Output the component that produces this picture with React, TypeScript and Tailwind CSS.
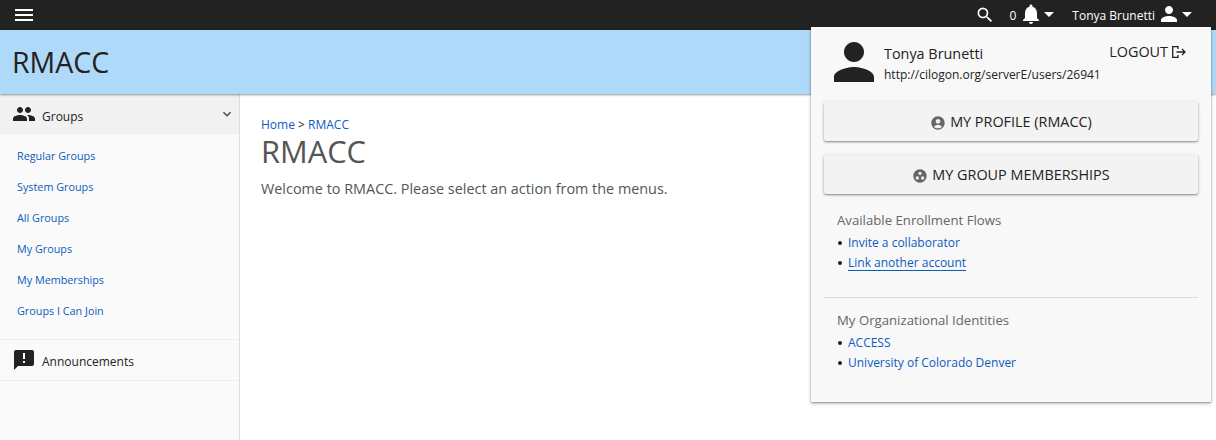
import type { ReactNode } from "react";
import {
  MdAccountCircle,
  MdAnnouncement,
  MdExpandMore,
  MdGroupWork,
  MdMenu,
  MdNotifications,
  MdPeople,
  MdPerson,
  MdSearch,
} from "react-icons/md";

const groupLinks = [
  "Regular Groups",
  "System Groups",
  "All Groups",
  "My Groups",
  "My Memberships",
  "Groups I Can Join",
];

function Caret() {
  return (
    <svg viewBox="0 0 10 5" className="mb-[2px] ml-px h-[5px] w-[10px] fill-white">
      <path d="M0 0h10L5 5z" />
    </svg>
  );
}

function LogoutIcon() {
  return (
    <svg viewBox="0 0 14 12" className="mb-px h-[12px] w-[14px]" fill="none" stroke="#222" strokeWidth="1.3">
      <path d="M6 3V.7H.7v10.6H6V9M4.5 6H13M10 3l3 3-3 3" />
    </svg>
  );
}

function ProfileButton({ icon, children }: { icon: ReactNode; children: ReactNode }) {
  return (
    <button className="flex h-[39px] w-full items-center justify-center gap-[4px] rounded-[2px] bg-[#f3f3f3] text-[14.4px] leading-[20px] text-[#222] shadow-[0_1px_2px_rgba(0,0,0,0.4),0_1px_4px_rgba(0,0,0,0.1)]">
      <span className="mt-[2px] text-[16px] text-[#666]">{icon}</span>
      {children}
    </button>
  );
}

function LinkSection({ title, links }: { title: string; links: { label: string; active?: boolean }[] }) {
  return (
    <section className="px-[13px]">
      <h2 className="h-[20px] text-[13.2px] leading-[20px] text-[#666]">{title}</h2>
      <ul className="mt-[3px]">
        {links.map((l) => (
          <li key={l.label} className="flex h-[20px] items-start text-[12px]">
            <span className="mt-[8px] mr-[6px] ml-px size-[4px] rounded-full bg-[#222]" />
            <a
              className={
                l.active
                  ? "h-[18px] border-b border-[#0b5cbf] leading-[20px] text-[#0b5cbf]"
                  : "h-[18px] leading-[20px] text-[#0b5cbf]"
              }
            >
              {l.label}
            </a>
          </li>
        ))}
      </ul>
    </section>
  );
}

function UserPanel() {
  return (
    <div className="absolute top-[27px] right-[5px] z-20 h-[375px] w-[400px] bg-[#f8f8f8] px-[13px] text-[#222] shadow-[0_1px_2px_rgba(0,0,0,0.4),0_2px_5px_rgba(0,0,0,0.12)]">
      <div className="flex h-[75px] items-start">
        <MdPerson className="mt-[5px] size-[60px]" />
        <div className="pt-[17px]">
          <div className="text-[14.4px] leading-[20px]">Tonya Brunetti</div>
          <div className="mt-px text-[12px] leading-[20px]">http://cilogon.org/serverE/users/26941</div>
        </div>
        <a className="mt-[15px] mr-[12px] ml-auto flex items-center gap-[4px] text-[14.4px] leading-[20px]">
          LOGOUT <LogoutIcon />
        </a>
      </div>
      <div className="flex flex-col gap-[14px]">
        <ProfileButton icon={<MdAccountCircle />}>MY PROFILE (RMACC)</ProfileButton>
        <ProfileButton icon={<MdGroupWork />}>MY GROUP MEMBERSHIPS</ProfileButton>
      </div>
      <div className="pt-[16px]">
        <LinkSection
          title="Available Enrollment Flows"
          links={[{ label: "Invite a collaborator" }, { label: "Link another account", active: true }]}
        />
      </div>
      <hr className="mt-[24px] mb-[12px] border-[#ddd]" />
      <LinkSection
        title="My Organizational Identities"
        links={[{ label: "ACCESS" }, { label: "University of Colorado Denver" }]}
      />
    </div>
  );
}

export default function App() {
  return (
    <div className="relative flex h-[440px] w-[1216px] flex-col overflow-hidden bg-white font-['Open_Sans',sans-serif] text-[#222]">
      <nav className="flex h-[30px] shrink-0 items-center bg-[#222] text-[12px] text-white">
        <MdMenu className="ml-[12px] size-[24px]" />
        <MdSearch className="ml-auto size-[20px]" />
        <span className="mt-[2px] ml-[14px]">0</span>
        <MdNotifications className="mb-[2px] ml-[3px] size-[24px]" />
        <Caret />
        <span className="mt-[2px] ml-[18px]">Tonya Brunetti</span>
        <MdPerson className="mb-[2px] ml-[2px] size-[24px]" />
        <Caret />
        <span className="w-[24px]" />
      </nav>
      <header className="z-10 flex h-[64px] shrink-0 items-center bg-[#afd9f9] pl-[12px] text-[28.5px] shadow-[0_1px_2px_rgba(0,0,0,0.4)]">
        RMACC
      </header>
      <div className="flex grow">
        <aside className="w-[240px] border-r border-[#ddd] bg-[#fafafa]">
          <div className="flex h-[40px] items-center bg-[#f1f1f1] pl-[12px] text-[12px]">
            <MdPeople className="size-[24px]" />
            <span className="mt-[5px] ml-[6px]">Groups</span>
            <MdExpandMore className="mr-[4px] ml-auto size-[16px] text-[#444]" />
          </div>
          <ul className="pt-[6px] pl-[17px] text-[10.8px] text-[#0b5cbf]">
            {groupLinks.map((l) => (
              <li key={l} className="h-[31px] leading-[31px]">
                {l}
              </li>
            ))}
          </ul>
          <div className="mt-[13px] flex h-[42px] items-center border-y border-[#f0f0f0] pl-[12px] text-[12px]">
            <MdAnnouncement className="size-[24px]" />
            <span className="mt-[4px] ml-[6px]">Announcements</span>
          </div>
        </aside>
        <main className="pt-[21px] pl-[21px]">
          <div className="h-[20px] text-[12px] leading-[20px]">
            <a className="text-[#0b5cbf]">Home</a> &gt; <a className="text-[#0b5cbf]">RMACC</a>
          </div>
          <h1 className="h-[34px] text-[30.8px] leading-[32px] text-[#555]">RMACC</h1>
          <p className="mt-[10px] text-[14.4px] leading-[20px] text-[#555]">
            Welcome to RMACC. Please select an action from the menus.
          </p>
        </main>
      </div>
      <UserPanel />
    </div>
  );
}
